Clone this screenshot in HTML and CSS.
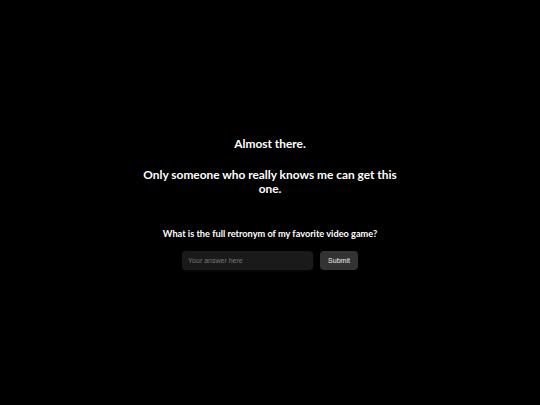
FILE: index.html
```html
<!DOCTYPE html>
<html>
  <head>
    <title>Almost there</title>
    <meta charset="UTF-8" />
    <meta name="viewport" content="width=device-width, initial-scale=1.0" />
    <link rel="stylesheet" href="styles.css">
  </head>
  <body>
    <main class="riddle">
      <h2 class="intro">Almost there.</h2>
      <h2 class="intro">Only someone who really knows me can get this one.</h2>

      <p class="question">What is the full retronym of my favorite video game?</p>

      <form class="answer-form" onsubmit="return false;">
        <input type="text" class="answer-input" placeholder="Your answer here">
        <button type="submit" class="submit-btn">Submit</button>
      </form>
    </main>
  </body>
</html>
```

FILE: styles.css
```css
html, body {
  height: 100%;
}
body {
  margin: 0;
  background-color: #000;
  color: #fff;
  font-family: Lato, sans-serif;
  display: flex;
  align-items: center;
  justify-content: center;
}
.riddle {
  width: 268px;
  padding-top: 2px;
  text-align: center;
}
.intro {
  font-size: 11.9px;
  font-weight: 700;
  line-height: 14px;
  margin: 0 0 17px;
}
.question {
  font-size: 9.2px;
  font-weight: 700;
  margin: 32px -20px 12px;
}
.answer-form {
  display: flex;
  justify-content: center;
  gap: 7px;
}
.answer-input {
  width: 131px;
  height: 19px;
  box-sizing: border-box;
  background: #1a1a1a;
  border: none;
  border-radius: 4px;
  padding: 0 6px;
  color: #fff;
  font-family: "Liberation Sans", sans-serif;
  font-size: 7px;
  box-shadow: 0 1px 3px rgba(255,255,255,0.04);
}
.answer-input::placeholder {
  color: #777;
}
.submit-btn {
  height: 19px;
  padding: 0 8px;
  background: #333;
  color: #eee;
  border: none;
  border-radius: 4px;
  font-family: "Liberation Sans", sans-serif;
  font-size: 7px;
  cursor: pointer;
}
```
